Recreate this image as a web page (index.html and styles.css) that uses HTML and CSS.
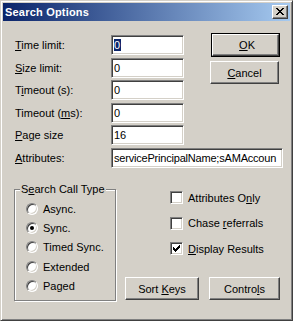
FILE: index.html
```html
<!DOCTYPE html>
<html lang="en">
<head>
    <meta charset="UTF-8" />
    <title>Search Options</title>
    <link rel="stylesheet" href="styles.css">
</head>
<body>

<div class="window">
    <!-- Barra de título -->
    <div class="titlebar">
        <span class="title">Search Options</span>
        <span class="close-btn">
            <svg width="8" height="7" viewBox="0 0 8 7" shape-rendering="crispEdges">
                <path d="M0 0h2v1h-2zM6 0h2v1h-2zM1 1h2v1h-2zM5 1h2v1h-2zM2 2h4v1h-4zM3 3h2v1h-2zM2 4h4v1h-4zM1 5h2v1h-2zM5 5h2v1h-2zM0 6h2v1h-2zM6 6h2v1h-2z" fill="#000"/>
            </svg>
        </span>
    </div>

    <div class="content">
        <div class="top">
            <div class="fields">
                <label><u>T</u>ime limit:</label>
                <div class="input"><span class="sel">0</span></div>
                <label><u>S</u>ize limit:</label>
                <div class="input">0</div>
                <label>T<u>i</u>meout (s):</label>
                <div class="input">0</div>
                <label>Timeout (<u>m</u>s):</label>
                <div class="input">0</div>
                <label><u>P</u>age size</label>
                <div class="input">16</div>
            </div>
            <div class="buttons">
                <div class="default-frame"><button class="btn">&nbsp;<u>O</u>K</button></div>
                <button class="btn cancel"><u>C</u>ancel</button>
            </div>
        </div>

        <div class="attr-row">
            <label><u>A</u>ttributes:</label>
            <div class="input wide">servicePrincipalName;sAMAccoun</div>
        </div>

        <div class="bottom">
            <div class="group">
                <span class="legend">S<u>e</u>arch Call Type</span>
                <div class="radio-row"><span class="radio"></span><span>Async.</span></div>
                <div class="radio-row"><span class="radio on"></span><span>Sync.</span></div>
                <div class="radio-row"><span class="radio"></span><span>Timed Sync.</span></div>
                <div class="radio-row"><span class="radio"></span><span>Extended</span></div>
                <div class="radio-row"><span class="radio"></span><span>Paged</span></div>
            </div>

            <div class="side">
                <div class="checks">
                    <div class="check-row"><span class="check"></span><span>Attributes O<u>n</u>ly</span></div>
                    <div class="check-row"><span class="check"></span><span>Chase <u>r</u>eferrals</span></div>
                    <div class="check-row">
                        <span class="check">
                            <svg width="7" height="7" viewBox="0 0 7 7" shape-rendering="crispEdges">
                                <path d="M6 0h1v3h-1zM5 1h1v3h-1zM4 2h1v3h-1zM3 3h1v3h-1zM2 4h1v3h-1zM1 3h1v3h-1zM0 2h1v3h-1z" fill="#000"/>
                            </svg>
                        </span>
                        <span><u>D</u>isplay Results</span>
                    </div>
                </div>
                <div class="side-buttons">
                    <button class="btn sort">Sort <u>K</u>eys</button>
                    <button class="btn controls">Contro<u>l</u>s</button>
                </div>
            </div>
        </div>
    </div>
</div>

</body>
</html>
```

FILE: styles.css
```css
/* Janela estilo Windows clássico */
* {
    box-sizing: border-box;
}

body {
    margin: 0;
    font-family: 'Liberation Sans', Arial, sans-serif;
    font-size: 11px;
    color: #000;
    background: #d4d0c8;
}

u {
    text-decoration: underline;
    text-underline-offset: 1px;
}

.window {
    width: 293px;
    height: 321px;
    background: #d4d0c8;
    border: 1px solid;
    border-color: #d4d0c8 #404040 #404040 #d4d0c8;
    box-shadow: inset 1px 1px #fff, inset -1px -1px #808080;
    padding: 2px;
}

.titlebar {
    height: 18px;
    background: linear-gradient(to right, #0a246a, #a6caf0);
    display: flex;
    align-items: center;
    justify-content: space-between;
    padding: 0 2px 0 2px;
}

.title {
    color: #fff;
    font-weight: bold;
    font-size: 11px;
    letter-spacing: 0.2px;
}

.close-btn {
    width: 16px;
    height: 14px;
    background: #d4d0c8;
    border: 1px solid;
    border-color: #fff #404040 #404040 #fff;
    box-shadow: inset -1px -1px #808080;
    display: flex;
    align-items: center;
    justify-content: center;
    padding: 0 1px 1px 0;
}

.close-btn svg {
    display: block;
}

.content {
    padding: 12px 0 0 12px;
}

/* Campos do topo */
.top {
    display: flex;
    align-items: flex-start;
}

.fields {
    display: grid;
    grid-template-columns: 96px 73px;
    grid-auto-rows: 20px;
    row-gap: 2.5px;
    margin-top: 2px;
}

label {
    line-height: 20px;
    white-space: nowrap;
}

.input {
    height: 20px;
    background: #fff;
    border: 1px solid;
    border-color: #808080 #fff #fff #808080;
    box-shadow: inset 1px 1px #404040, inset -1px -1px #d4d0c8;
    padding: 2px 0 0 2px;
    line-height: 14px;
    white-space: nowrap;
    overflow: hidden;
}

.input.wide {
    width: 172px;
    letter-spacing: -0.2px;
}

.sel {
    background: #0a246a;
    color: #fff;
    padding: 0 1px 0 0;
}

.buttons {
    display: flex;
    flex-direction: column;
    margin-left: 27px;
}

.btn {
    font-family: inherit;
    font-size: 11px;
    color: #000;
    background: #d4d0c8;
    border: 1px solid;
    border-color: #fff #404040 #404040 #fff;
    box-shadow: inset -1px -1px #808080;
    border-radius: 0;
    padding: 0;
    height: 23px;
    width: 69px;
}

.default-frame {
    border: 1px solid #000;
    width: 69px;
    height: 24px;
}

.default-frame .btn {
    width: 67px;
    height: 22px;
    display: block;
}

.cancel {
    margin-top: 4px;
    margin-left: -1px;
}

.attr-row {
    display: flex;
    margin-top: 3px;
}

.attr-row label {
    width: 96px;
}

/* Parte de baixo */
.bottom {
    display: flex;
    margin-top: 21px;
}

.group {
    position: relative;
    width: 102px;
    height: 112px;
    margin-left: -1px;
    border: 1px solid #808080;
    box-shadow: inset 1px 1px #fff, 1px 1px #fff;
    padding: 9px 0 0 11px;
}

.legend {
    position: absolute;
    top: -7px;
    left: 5px;
    padding: 0 1px;
    background: #d4d0c8;
    line-height: 13px;
}

.radio-row {
    display: flex;
    align-items: center;
    height: 19.3px;
}

.radio {
    width: 12px;
    height: 12px;
    border-radius: 50%;
    background: #fff;
    border: 1px solid;
    border-color: #808080 #fff #fff #808080;
    box-shadow: inset 1px 1px #404040, inset -1px -1px #d4d0c8;
    margin-right: 5px;
    position: relative;
}

.radio.on::after {
    content: "";
    position: absolute;
    left: 3px;
    top: 3px;
    width: 4px;
    height: 4px;
    border-radius: 50%;
    background: #000;
}

.side {
    flex: 1;
    display: flex;
    flex-direction: column;
    justify-content: space-between;
}

.checks {
    padding: 2px 0 0 54px;
    display: flex;
    flex-direction: column;
    gap: 12.5px;
}

.check-row {
    display: flex;
    align-items: center;
    height: 13px;
}

.check {
    width: 13px;
    height: 13px;
    background: #fff;
    border: 1px solid;
    border-color: #808080 #fff #fff #808080;
    box-shadow: inset 1px 1px #404040, inset -1px -1px #d4d0c8;
    margin-right: 5px;
    display: flex;
    align-items: center;
    justify-content: center;
}

.check svg {
    display: block;
}

.side-buttons {
    display: flex;
    gap: 10px;
    padding-left: 9px;
    margin-bottom: 1px;
}

.sort {
    width: 74px;
}

.controls {
    width: 71px;
}
```
